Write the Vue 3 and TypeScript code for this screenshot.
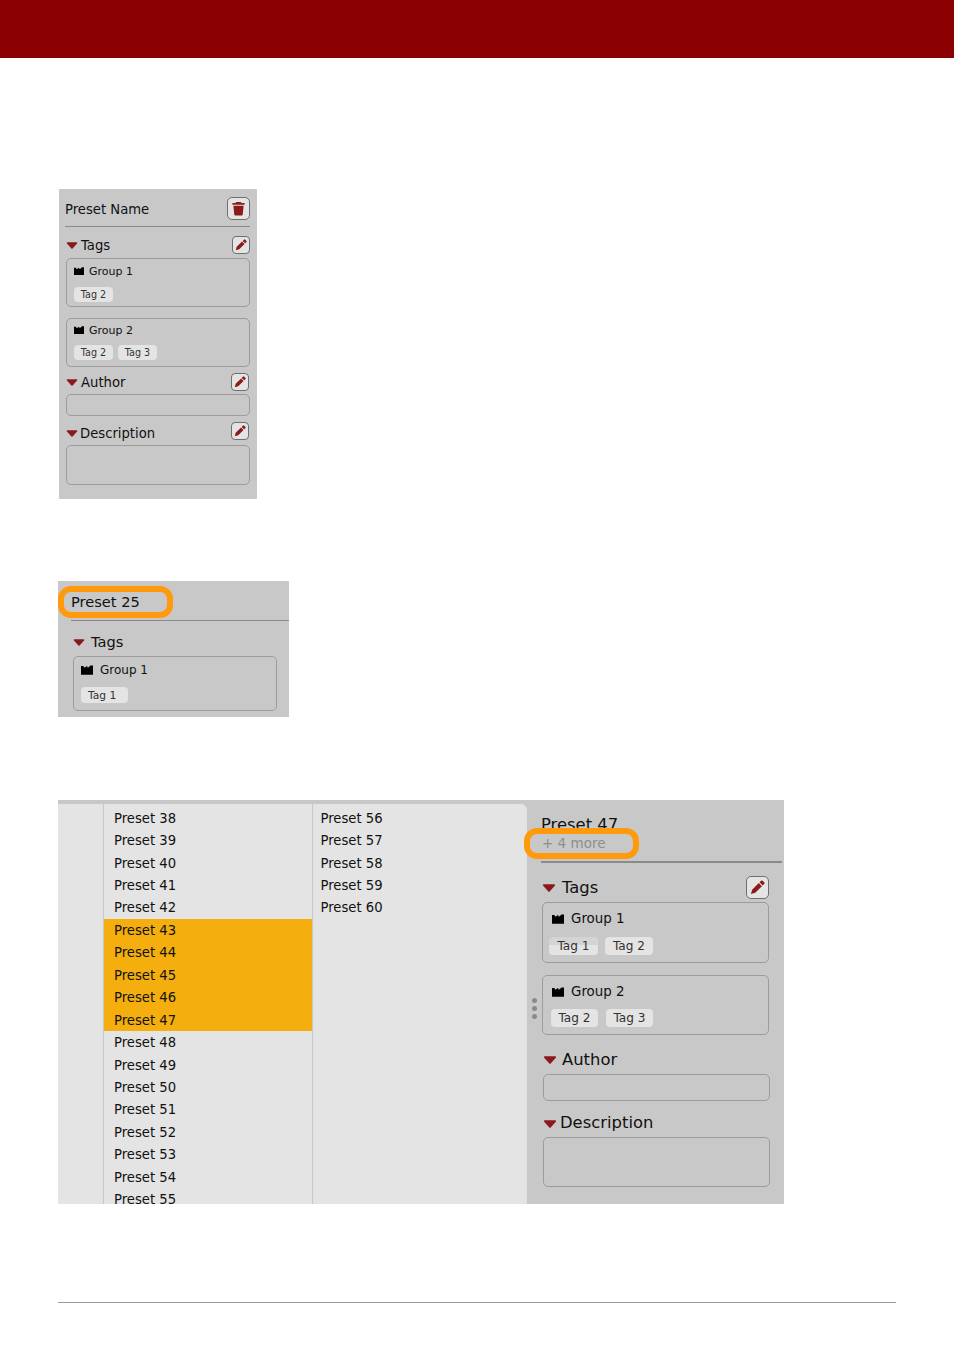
<script setup lang="ts">
const col1: number[] = Array.from({ length: 18 }, (_, i) => 38 + i)
const col2: number[] = Array.from({ length: 5 }, (_, i) => 56 + i)
const selected = (n: number): boolean => n >= 43 && n <= 47
</script>

<template>
  <div class="page">
    <svg class="defs" width="0" height="0" aria-hidden="true">
      <symbol id="pen" viewBox="0 0 16 16">
        <path d="M11.8.9a1.300 1.300 0 0 1 1.800 0l1.500 1.500a1.300 1.300 0 0 1 0 1.800L13.500 5.800 10.200 2.500zM9.400 3.300l3.300 3.300L5.600 13.700 1 15l1.300-4.600z" fill="#8b1a1a" />
      </symbol>
      <symbol id="trash" viewBox="0 0 16 16">
        <path d="M5.500 1h5l.5 1h3.500v2h-13V2H5zM2.500 5h11l-1 9.500q-.1 1-1.100 1H4.600q-1 0-1.100-1z" fill="#8b1a1a" />
      </symbol>
      <symbol id="tri" viewBox="0 0 12 7">
        <path d="M1.500 1h9L6 6z" fill="#8b1a1a" stroke="#8b1a1a" stroke-width="1.600" stroke-linejoin="round" />
      </symbol>
      <symbol id="grp" viewBox="0 0 12 9.500">
        <path d="M0 .8h2.400l.8 1.700L6 .8l.9 1.700L9.600.3H12v9.200H0z" fill="#000" />
      </symbol>
    </svg>

    <header class="banner"></header>

    <section class="panel p1">
      <div class="title-row">
        <span class="title">Preset Name</span>
        <button class="btn big"><svg><use href="#trash" /></svg></button>
      </div>
      <div class="rule"></div>

      <div class="head tags-head">
        <svg class="tri"><use href="#tri" /></svg>
        <span>Tags</span>
        <button class="btn"><svg><use href="#pen" /></svg></button>
      </div>
      <div class="box group g1">
        <div class="g-name"><svg class="g-ic"><use href="#grp" /></svg>Group 1</div>
        <div class="g-tags"><span class="tag">Tag 2</span></div>
      </div>
      <div class="box group g2">
        <div class="g-name"><svg class="g-ic"><use href="#grp" /></svg>Group 2</div>
        <div class="g-tags"><span class="tag">Tag 2</span><span class="tag">Tag 3</span></div>
      </div>

      <div class="head author-head">
        <svg class="tri"><use href="#tri" /></svg>
        <span>Author</span>
        <button class="btn"><svg><use href="#pen" /></svg></button>
      </div>
      <div class="box author-box"></div>

      <div class="head desc-head">
        <svg class="tri"><use href="#tri" /></svg>
        <span>Description</span>
        <button class="btn"><svg><use href="#pen" /></svg></button>
      </div>
      <div class="box desc-box"></div>
    </section>

    <section class="panel p2">
      <div class="title-row"><span class="title">Preset 25</span></div>
      <div class="mark"></div>
      <div class="rule"></div>
      <div class="head tags-head">
        <svg class="tri"><use href="#tri" /></svg>
        <span>Tags</span>
      </div>
      <div class="box group g1">
        <div class="g-name"><svg class="g-ic"><use href="#grp" /></svg>Group 1</div>
        <div class="g-tags"><span class="tag">Tag 1</span></div>
      </div>
    </section>

    <section class="panel p3">
      <div class="rail"></div>
      <div class="list l1">
        <div v-for="n in col1" :key="n" class="row" :class="{ on: selected(n) }">Preset {{ n }}</div>
      </div>
      <div class="list l2">
        <div v-for="n in col2" :key="n" class="row">Preset {{ n }}</div>
      </div>
      <div class="detail">
        <div class="grip"><i></i><i></i><i></i></div>
        <div class="title">Preset 47</div>
        <div class="more">+ 4 more</div>
        <div class="mark"></div>
        <div class="rule"></div>

        <div class="head tags-head">
          <svg class="tri"><use href="#tri" /></svg>
          <span>Tags</span>
          <button class="btn"><svg><use href="#pen" /></svg></button>
        </div>
        <div class="box group g1">
          <div class="g-name"><svg class="g-ic"><use href="#grp" /></svg>Group 1</div>
          <div class="g-tags"><span class="tag half">Tag 1</span><span class="tag">Tag 2</span></div>
        </div>
        <div class="box group g2">
          <div class="g-name"><svg class="g-ic"><use href="#grp" /></svg>Group 2</div>
          <div class="g-tags"><span class="tag">Tag 2</span><span class="tag">Tag 3</span></div>
        </div>

        <div class="head author-head">
          <svg class="tri"><use href="#tri" /></svg>
          <span>Author</span>
        </div>
        <div class="box author-box"></div>

        <div class="head desc-head">
          <svg class="tri"><use href="#tri" /></svg>
          <span>Description</span>
        </div>
        <div class="box desc-box"></div>
      </div>
    </section>

    <div class="foot"></div>
  </div>
</template>

<style scoped>
.page {
  width: 954px;
  height: 1349px;
  background: #fff;
  font-family: "DejaVu Sans", sans-serif;
  color: #111;
  overflow: hidden;
}
.defs { position: absolute; }
.banner { height: 58px; background: #8b0000; }

.panel { background: #c8c8c8; box-sizing: border-box; position: relative; }
.title-row { display: flex; align-items: center; justify-content: space-between; }
.rule { background: #8a8a8a; height: 1px; }
.head { display: flex; align-items: center; }
.head span { flex: 1; }
.box {
  box-sizing: border-box;
  border: 1px solid #9c9c9c;
  border-radius: 5px;
}
.btn {
  box-sizing: border-box;
  width: 18px;
  height: 18px;
  padding: 0;
  background: #e4e4e4;
  border: 1px solid #6f6f6f;
  border-radius: 4px;
  display: flex;
  align-items: center;
  justify-content: center;
}
.btn svg { width: 12px; height: 12px; }
.tri { flex: none; }
.g-name { display: flex; align-items: center; }
.g-ic { flex: none; }
.g-tags { display: flex; }
.tag {
  background: #e4e4e4;
  border-radius: 4px;
  color: #333;
  display: flex;
  align-items: center;
  justify-content: center;
  box-sizing: border-box;
}
.mark {
  position: absolute;
  box-sizing: border-box;
  border: 6px solid #ff9a0d;
  border-radius: 13px;
}

/* first panel */
.p1 { width: 198px; height: 310px; margin: 131px 0 0 59px; padding: 8px 7px 0 6px; }
.p1 .title-row { height: 23px; font-size: 13.2px; }
.p1 .title { padding-top: 1px; }
.p1 .btn.big { width: 23px; height: 23px; border-radius: 5px; }
.p1 .btn.big svg { width: 15px; height: 15px; }
.p1 .rule { margin-top: 6px; }
.p1 .head { font-size: 13.2px; height: 18px; margin-left: 1px; }
.p1 .tri { width: 12px; height: 7px; margin-right: 3px; margin-top: 1px; }
.p1 .tags-head { margin-top: 9px; }
.p1 .author-head { margin-top: 6px; padding-right: 1px; }
.p1 .desc-head { margin-top: 6px; padding-right: 1px; }
.p1 .desc-head .tri { margin-right: 2px; margin-top: 5px; }
.p1 .desc-head span { padding-top: 4px; }
.p1 .box { margin-left: 1px; }
.p1 .group { height: 49px; padding: 5px 0 0 7px; font-size: 11px; }
.p1 .g1 { margin-top: 4px; }
.p1 .g2 { margin-top: 11px; padding-top: 4px; }
.p1 .g-name { height: 14px; }
.p1 .g-ic { width: 10px; height: 8px; margin-right: 5px; }
.p1 .g-tags { margin-top: 9px; gap: 5px; }
.p1 .g2 .g-tags { margin-top: 8px; }
.p1 .tag { width: 39px; height: 15px; font-size: 9.6px; }
.p1 .author-box { height: 22px; margin-top: 3px; }
.p1 .desc-box { height: 40px; margin-top: 5px; }

/* second panel */
.p2 { width: 231px; height: 136px; margin: 82px 0 0 58px; padding: 9px 0 0 13px; }
.p2 .title-row { font-size: 14.600px; height: 22px; }
.p2 .mark { left: 0; top: 5px; width: 115px; height: 32px; }
.p2 .rule { margin-top: 8px; }
.p2 .head { font-size: 14.600px; height: 18px; margin: 11px 0 0 2px; }
.p2 .tri { width: 12px; height: 7px; margin-right: 6px; margin-top: 2px; }
.p2 .group { width: 204px; height: 55px; margin: 6px 0 0 2px; padding: 5px 0 0 7px; font-size: 12px; }
.p2 .g-name { height: 16px; }
.p2 .g-ic { width: 12px; height: 10px; margin-right: 7px; }
.p2 .g-tags { margin-top: 9px; }
.p2 .tag { width: 47px; height: 16px; font-size: 10.7px; justify-content: flex-start; padding-left: 7px; }

/* third panel */
.p3 {
  width: 726px;
  height: 404px;
  margin: 83px 0 0 58px;
  padding-top: 4px;
  display: flex;
  overflow: hidden;
}
.rail { width: 45px; background: #e4e4e4; border-right: 1px solid #c8c8c8; flex: none; }
.list { background: #e4e4e4; font-size: 13.200px; padding-top: 2.700px; overflow: hidden; flex: none; box-sizing: border-box; }
.l1 { width: 209px; border-right: 1px solid #c8c8c8; }
.l2 { width: 214px; border-top-right-radius: 6px; }
.row { height: 22.44px; line-height: 23.4px; white-space: nowrap; }
.l1 .row { padding-left: 10px; }
.l2 .row { padding-left: 7.500px; }
.row.on { background: #f4ae0e; }
.detail { position: relative; flex: 1; padding: 0 2px 0 14px; min-width: 0; }
.detail .title { font-size: 16.4px; height: 20px; line-height: 20px; margin-top: 11px; }
.more {
  position: relative;
  font-size: 13.500px;
  color: #8e8e8e;
  background: #c8c8c8;
  height: 20px;
  line-height: 20px;
  margin: -2px 135px 0 -10px;
  padding-left: 11px;
}
.detail .mark { left: -3px; top: 24px; width: 115px; height: 31px; }
.detail .rule { height: 2px; margin-top: 8px; }
.detail .head { font-size: 16.4px; height: 23px; }
.detail .tri { width: 14px; height: 8px; margin-right: 6px; margin-top: 1px; }
.detail .tags-head { margin-top: 13px; padding-right: 13px; margin-left: 1px; }
.detail .btn { width: 23px; height: 23px; border-radius: 5px; }
.detail .btn svg { width: 15px; height: 15px; }
.detail .group { width: 227px; margin-left: 1px; padding: 7px 0 0 9px; font-size: 13.4px; }
.detail .g1 { height: 61px; margin-top: 3px; }
.detail .g2 { height: 60px; margin-top: 12px; }
.detail .g-name { height: 17px; }
.detail .g-ic { width: 12px; height: 10px; margin-right: 7px; }
.detail .g-tags { gap: 7px; }
.detail .g1 .g-tags { margin-top: 10px; margin-left: -3px; }
.detail .g2 .g-tags { margin-top: 9px; margin-left: -1px; gap: 8px; }
.detail .tag { width: 47px; height: 18px; font-size: 12.1px; }
.detail .g1 .tag { width: 48px; }
.detail .g1 .tag.half { width: 49px; }
.tag.half { background: linear-gradient(#d4d4d4 0 45%, #e4e4e4 45%); }
.detail .author-head { margin: 13px 0 0 2px; }
.detail .author-head .tri { margin-right: 5px; }
.detail .author-box { width: 227px; height: 27px; margin: 3px 0 0 2px; }
.detail .desc-head { margin: 10px 0 0 2px; }
.detail .desc-head .tri { margin-right: 3px; margin-top: 2px; }
.detail .desc-box { width: 227px; height: 50px; margin: 3px 0 0 2px; }
.grip {
  position: absolute;
  left: 4.500px;
  top: 194px;
  display: flex;
  flex-direction: column;
  gap: 3px;
}
.grip i { display: block; width: 5px; height: 5px; border-radius: 50%; background: #8a8a8a; }

.foot { height: 1px; background: #9a9a9a; margin: 98px 58px 0; }
</style>
